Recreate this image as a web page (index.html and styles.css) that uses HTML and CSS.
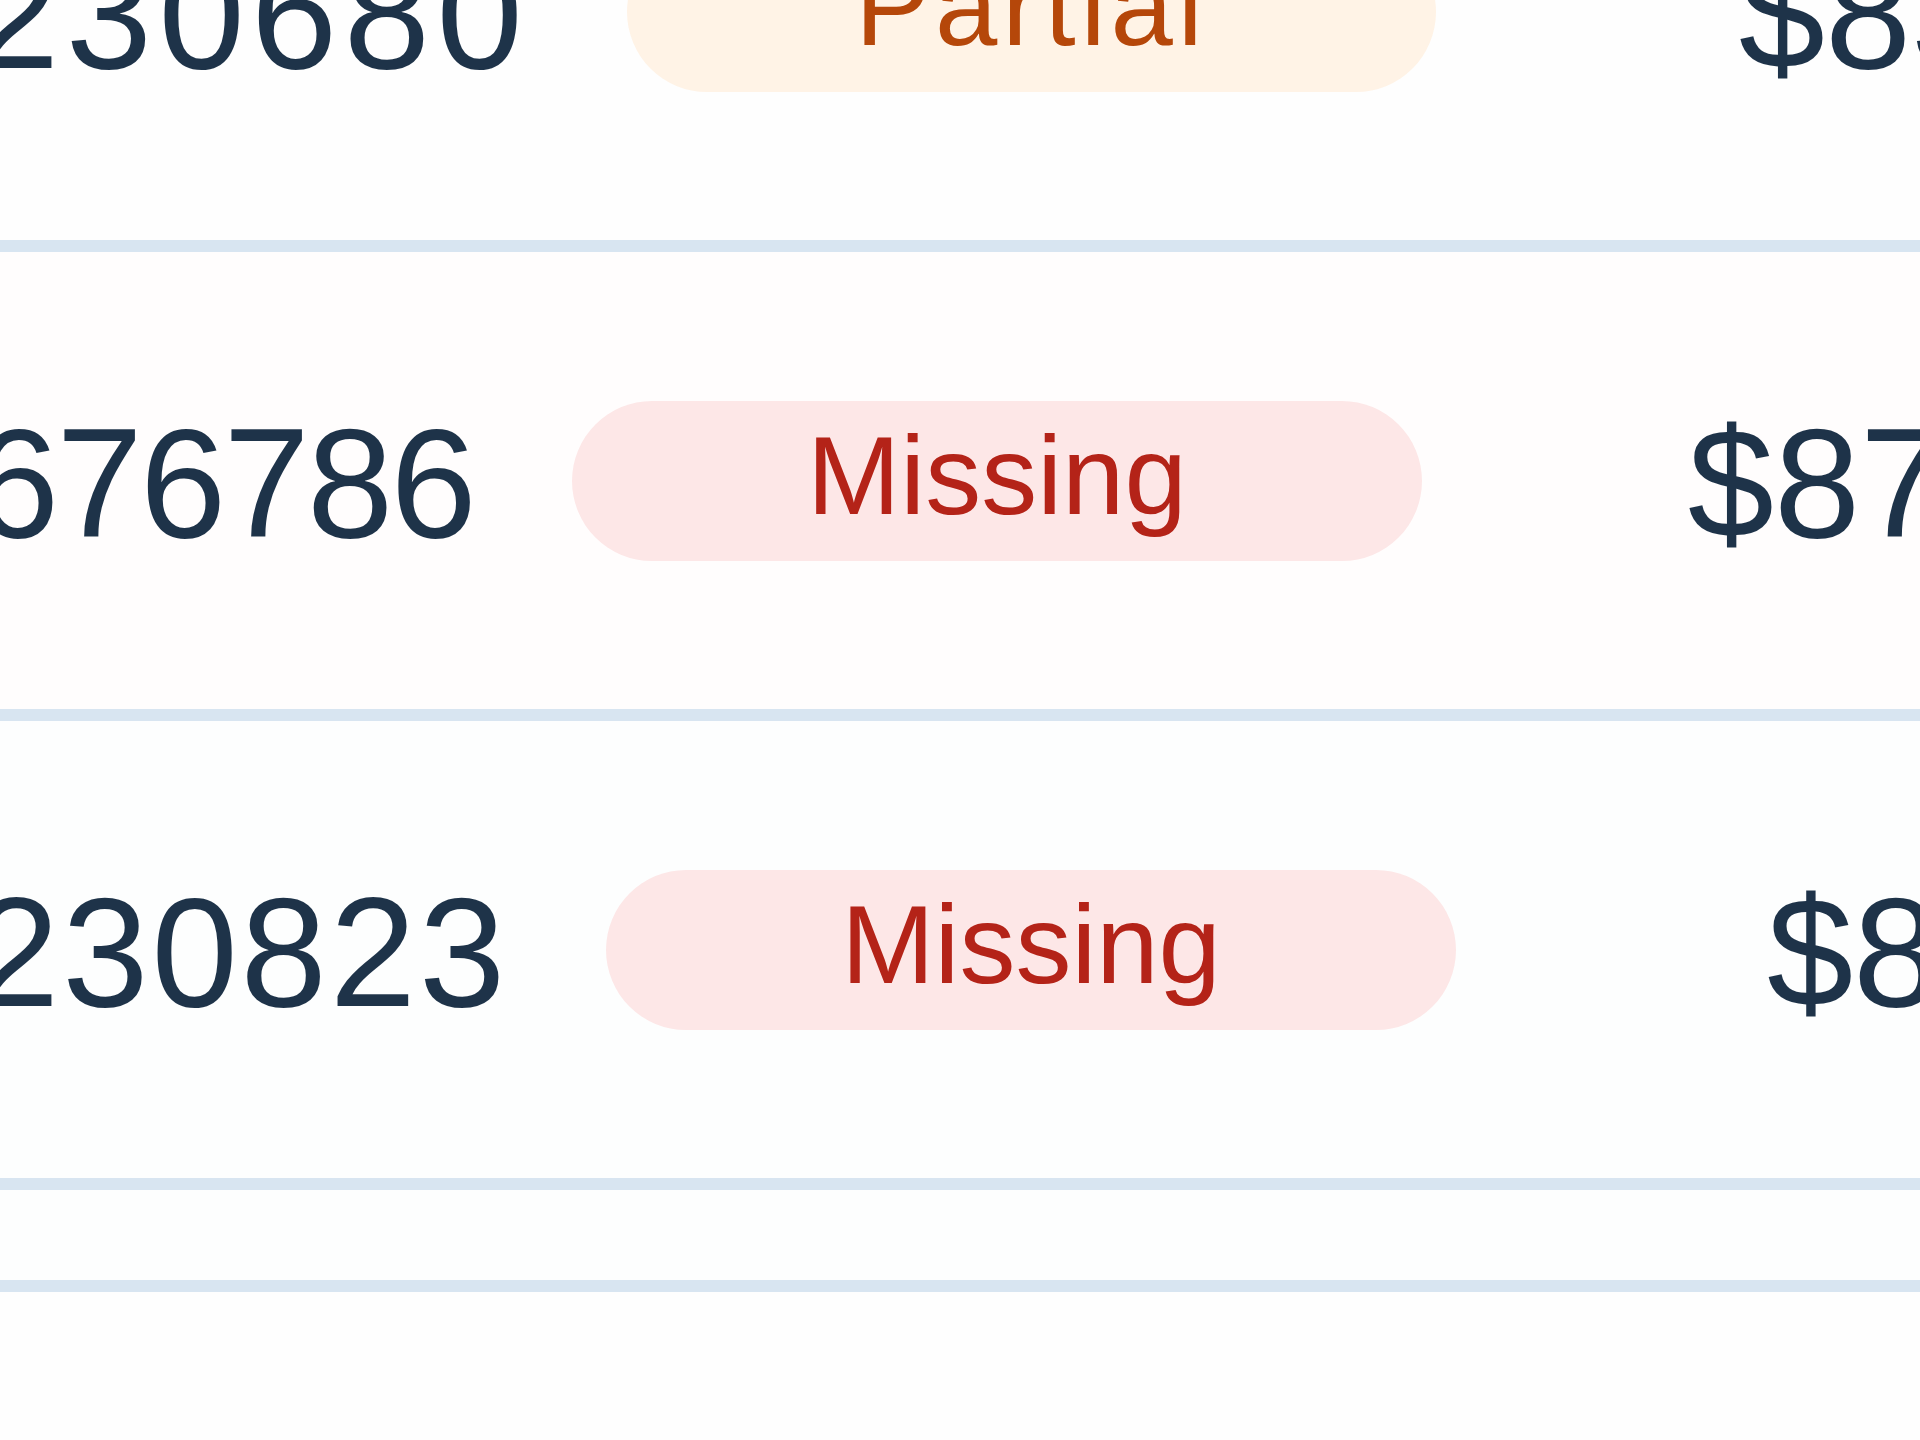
FILE: index.html
```html
<!DOCTYPE html>
<html lang="en">
<head>
    <meta charset="UTF-8">
    <meta name="viewport" content="width=device-width, initial-scale=1.0">
    <title>Invoices</title>
    <link rel="stylesheet" href="styles.css">
</head>
<body>
    <div class="ledger">
        <div class="ledger-row row-a">
            <span class="invoice-id">230680</span>
            <span class="status status-partial">Partial</span>
            <span class="amount">$835.40</span>
        </div>
        <div class="ledger-row row-b">
            <span class="invoice-id">676786</span>
            <span class="status status-missing">Missing</span>
            <span class="amount">$874.10</span>
        </div>
        <div class="ledger-row row-c">
            <span class="invoice-id">230823</span>
            <span class="status status-missing">Missing</span>
            <span class="amount">$812.65</span>
        </div>
        <div class="ledger-row ledger-spacer"></div>
    </div>
</body>
</html>
```
FILE: styles.css
```css
:root {
    --text-dark: #1e3349;
    --line-color: #d8e5f1;
    --partial-bg: #fff3e6;
    --partial-text: #b5470a;
    --missing-bg: #fde7e7;
    --missing-text: #b42318;
}

body {
    margin: 0;
    background: #fefefe;
    font-family: 'Liberation Sans', Arial, sans-serif;
    color: var(--text-dark);
    overflow: hidden;
    height: 1440px;
}

.ledger {
    margin-top: -217px; /* scrolled down into the list */
    margin-left: -27px;
    width: 2400px;
}

.ledger-row {
    display: flex;
    align-items: center;
    gap: 98px;
    height: 457px;
    border-bottom: 12px solid var(--line-color);
    white-space: nowrap;
}

.row-b {
    background: #fffdfd;
}

.row-c,
.ledger-spacer {
    background: #fdfefe;
}

.ledger-spacer {
    height: 90px;
}

.invoice-id,
.amount {
    font-size: 155px;
    line-height: 1;
    margin-top: 6px;
}

.row-a .invoice-id { letter-spacing: 6.5px; }
.row-b .invoice-id { letter-spacing: -2.7px; }
.row-c .invoice-id { letter-spacing: 3px; }

.status {
    display: inline-flex;
    align-items: center;
    box-sizing: border-box;
    height: 160px;
    padding: 0 235px 10px;
    border-radius: 80px;
    font-size: 112px;
    line-height: 1;
}

.status-partial {
    background: var(--partial-bg);
    color: var(--partial-text);
    letter-spacing: 5px;
    padding-left: 228px;
    padding-right: 228px;
}

.status-missing {
    background: var(--missing-bg);
    color: var(--missing-text);
}

.row-a .amount { margin-left: 205px; }
.row-b .amount { margin-left: 168px; }
.row-c .amount { margin-left: 213px; }
```
